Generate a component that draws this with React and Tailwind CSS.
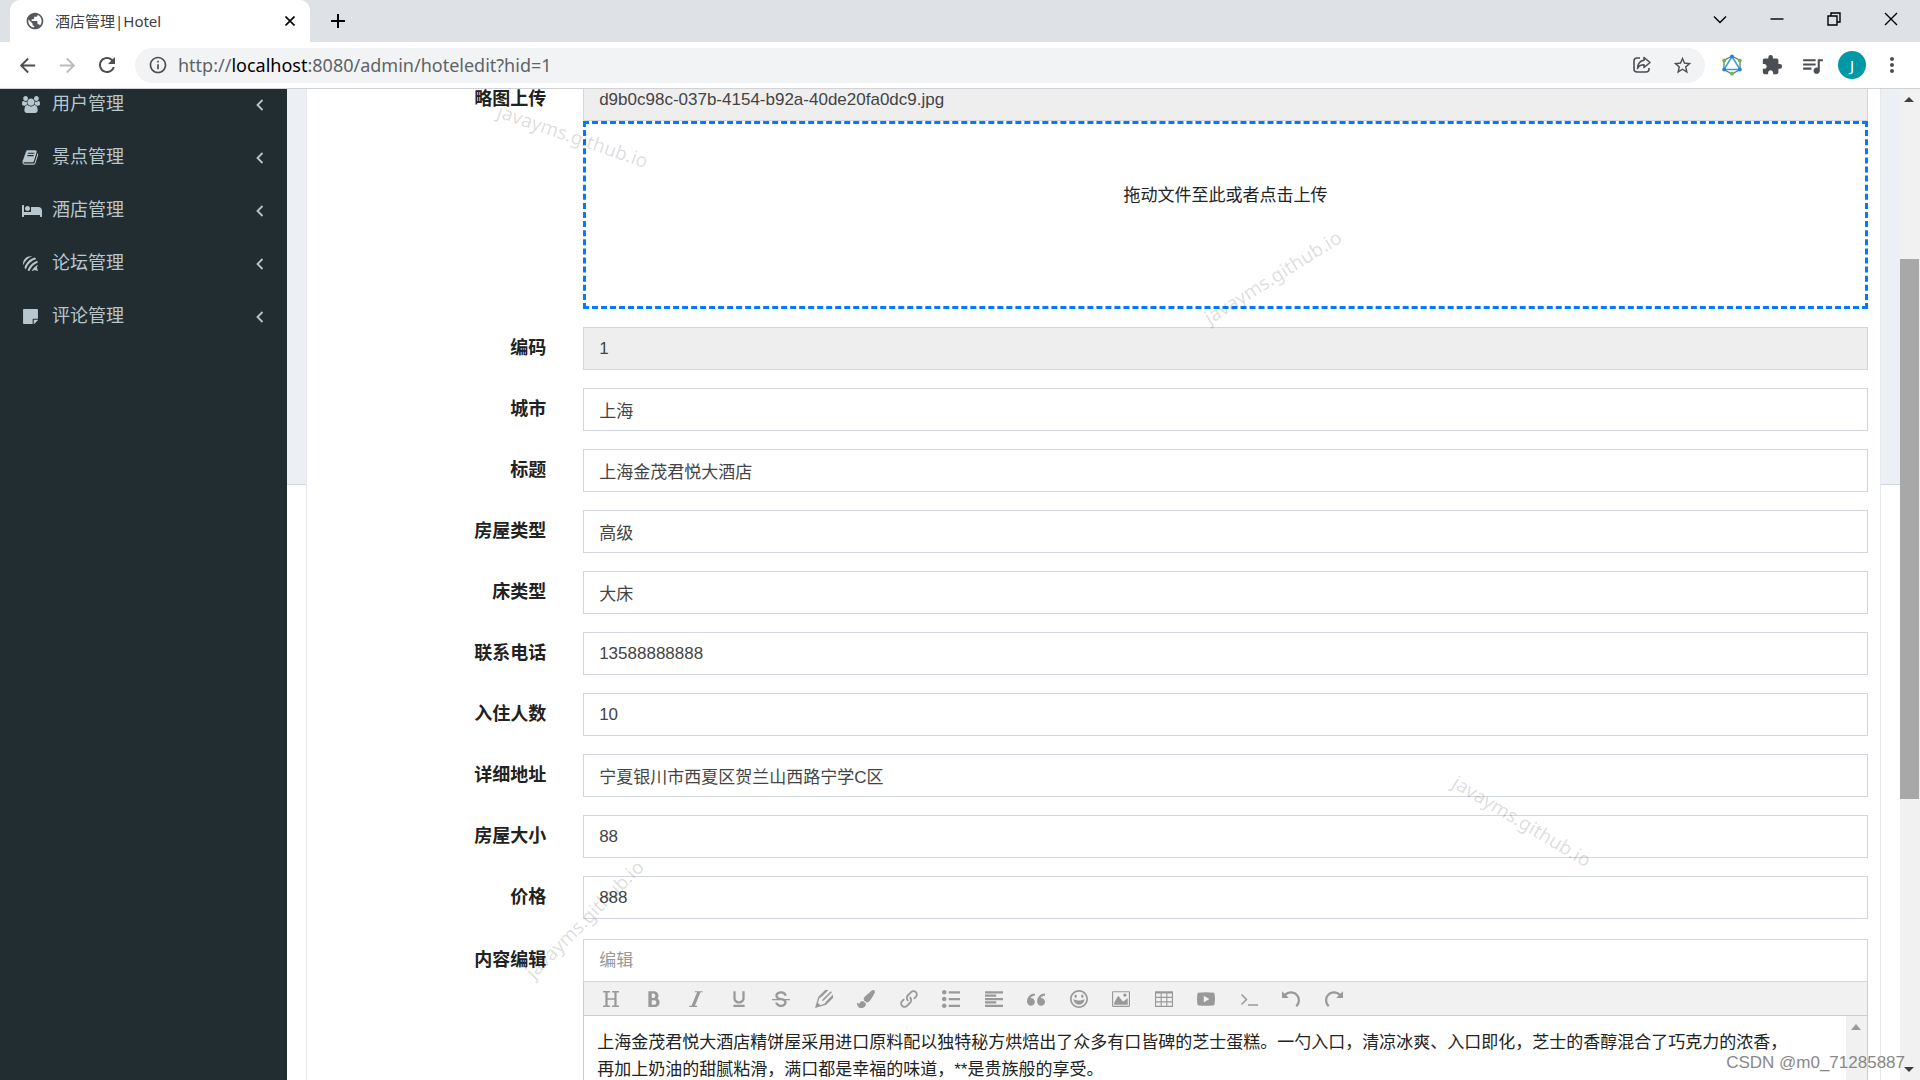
import { FaBed, FaForumbee, FaPaintBrush, FaStickyNote } from "react-icons/fa";
import {
  ImBold,
  ImHappy,
  ImImage,
  ImItalic,
  ImLink,
  ImList2,
  ImParagraphLeft,
  ImPencil2,
  ImPlay,
  ImQuotesLeft,
  ImRedo,
  ImStrikethrough,
  ImTable2,
  ImUnderline,
  ImUndo,
} from "react-icons/im";
import {
  MdArrowBack,
  MdArrowForward,
  MdExtension,
  MdInfoOutline,
  MdMoreVert,
  MdPublic,
  MdQueueMusic,
  MdRefresh,
  MdStarBorder,
} from "react-icons/md";

function UsersIcon({ size }) {
  return (
    <svg width={size + 1} height={size} viewBox="0 0 1920 1792" fill="currentColor">
      <path d="M593 896q-162 5-265 128h-134q-82 0-138-40.5t-56-118.5q0-353 124-353 6 0 43.5 21t97.5 42.5 119 21.5q67 0 133-23-5 37-5 66 0 139 81 256zm1071 637q0 120-73 189.5t-194 69.5h-874q-121 0-194-69.5t-73-189.5q0-53 3.5-103.5t14-109 26.5-108.5 43-97.5 62-81 85.5-53.5 111.5-20q10 0 43 21.5t73 48 107 48 135 21.5 135-21.5 107-48 73-48 43-21.5q61 0 111.5 20t85.5 53.5 62 81 43 97.5 26.5 108.5 14 109 3.5 103.5zm-1024-1277q0 106-75 181t-181 75-181-75-75-181 75-181 181-75 181 75 75 181zm704 384q0 159-112.5 271.5t-271.5 112.5-271.5-112.5-112.5-271.5 112.5-271.5 271.5-112.5 271.5 112.5 112.5 271.5zm576 225q0 78-56 118.5t-138 40.5h-134q-103-123-265-128 81-117 81-256 0-29-5-66 66 23 133 23 59 0 119-21.5t97.5-42.5 43.5-21q124 0 124 353zm-128-609q0 106-75 181t-181 75-181-75-75-181 75-181 181-75 181 75 75 181z" />
    </svg>
  );
}

function BookIcon({ size }) {
  return (
    <svg width={size} height={size} viewBox="64 0 1700 1792" fill="currentColor">
      <path d="M1703 478q40 57 18 129l-275 906q-19 64-76.5 107.5t-122.5 43.5h-923q-77 0-148.5-53.5t-99.5-131.5q-24-67-2-127 0-4 3-27t4-37q1-8-3-21.5t-3-19.5q2-11 8-21t16.5-23.5 16.5-23.5q23-38 45-91.5t30-91.5q3-10 .5-30t-.5-28q3-11 17-28t17-23q21-36 42-92t25-90q1-9-2.5-32t.5-28q4-13 22-30.5t22-22.5q19-26 42.5-84.5t27.5-96.5q1-8-3-25.5t-2-26.5q2-8 9-18t18-23 17-21q8-12 16.5-30.5t15-35 16-36 19.5-32 26.5-23.5 36-11.5 47.5 5.5l-1 3q38-9 51-9h761q74 0 114 56t18 130l-274 906q-36 119-71.5 153.5t-128.5 34.5h-869q-27 0-38 15-11 16-1 43 24 70 144 70h923q29 0 56-15.5t35-41.5l300-987q7-22 5-57 38 15 59 43zm-1064 2q-4 13 2 22.5t20 9.5h608q13 0 25.5-9.5t16.5-22.5l21-64q4-13-2-22.5t-20-9.5h-608q-13 0-25.5 9.5t-16.5 22.5zm-83 256q-4 13 2 22.5t20 9.5h608q13 0 25.5-9.5t16.5-22.5l21-64q4-13-2-22.5t-20-9.5h-608q-13 0-25.5 9.5t-16.5 22.5z" />
    </svg>
  );
}

function BedIcon({ size }) {
  return <FaBed size={size + 3} />;
}

function HeaderIcon({ size }) {
  return (
    <svg width={size} height={size} viewBox="0 0 18 18" fill="none" stroke="currentColor">
      <path d="M4.5 2v14M13.5 2v14" strokeWidth="2.2" />
      <path d="M1 1.7h7M10 1.7h7M1 16.3h7M10 16.3h7M4.5 9h9" strokeWidth="1.4" />
    </svg>
  );
}

function TerminalIcon({ size }) {
  return (
    <svg width={size} height={size} viewBox="0 0 18 18" fill="none" stroke="currentColor" strokeWidth="1.5">
      <path d="M1.5 4.5l5 5-5 5M8 15h10" />
    </svg>
  );
}

function ShareIcon() {
  return (
    <svg width="20" height="20" viewBox="0 0 20 20" fill="none" stroke="currentColor" strokeWidth="1.6">
      <path d="M8 3H5a3 3 0 0 0-3 3v8a3 3 0 0 0 3 3h9a3 3 0 0 0 3-3v-1" />
      <path d="M12 2.5l6 5-6 5V9.8C8.5 9.8 6.8 11 5.5 13.5 5.8 8.5 8.500 5.600 12 5.200z" strokeLinejoin="round" />
    </svg>
  );
}

function HexIcon() {
  return (
    <svg width="20" height="22" viewBox="0 0 20 22" fill="none">
      <path d="M10 2l8 4.500v9L10 20l-8-4.500v-9z" stroke="#5f7f7a" strokeWidth="1.300" />
      <path d="M10 2.500L18 15.500H2z" stroke="#3f9be6" strokeWidth="1.500" />
      <g fill="#1d86dc">
        <circle cx="10" cy="2.500" r="1.900" />
        <circle cx="2.200" cy="15.500" r="1.900" />
        <circle cx="17.800" cy="15.500" r="1.900" />
      </g>
      <g fill="#62c334">
        <circle cx="2.200" cy="6.500" r="1.900" />
        <circle cx="17.800" cy="6.500" r="1.900" />
        <circle cx="10" cy="19.700" r="1.900" />
      </g>
    </svg>
  );
}

function WindowIcon({ d }) {
  return (
    <svg width="14" height="14" viewBox="0 0 14 14" fill="none" stroke="currentColor" strokeWidth="1.4">
      <path d={d} />
    </svg>
  );
}

const windowButtons = [
  { title: "Search tabs", d: "M1 4.500l6 6 6-6" },
  { title: "Minimize", d: "M0.500 7h13" },
  { title: "Restore", d: "M1 4h9v9h-9zM4 4V1h9v9h-3" },
  { title: "Close", d: "M1 1l12 12M13 1L1 13" },
];

function TabStrip() {
  return (
    <div className="flex h-[42px] bg-[#dee1e6] pl-[10px]">
      <div className="flex w-[300px] items-center gap-[10px] rounded-t-[10px] bg-white px-[15px] text-[#3c4043]">
        <MdPublic size={20} className="text-[#55585c]" />
        <span className="flex-1 text-[15px]">酒店管理|Hotel</span>
        <button title="Close tab" className="text-black">
          <svg width="10" height="10" viewBox="0 0 10 10" stroke="currentColor" strokeWidth="1.600">
            <path d="M0.500 0.500l9 9M9.500 0.500l-9 9" />
          </svg>
        </button>
      </div>
      <button title="New tab" className="ml-5 self-center text-black">
        <svg width="16" height="16" viewBox="0 0 16 16" stroke="currentColor" strokeWidth="2">
          <path d="M8 1v14M1 8h14" />
        </svg>
      </button>
      <div className="ml-auto flex h-[37px] pr-px">
        {windowButtons.map((b) => (
          <button key={b.title} title={b.title} className="flex w-[57px] items-center justify-center text-black">
            <WindowIcon d={b.d} />
          </button>
        ))}
      </div>
    </div>
  );
}

function BarButton({ title, children }) {
  return (
    <button title={title} className="flex w-10 items-center justify-center">
      {children}
    </button>
  );
}

function AddressBar() {
  return (
    <div className="flex h-[47px] items-center border-b border-[#d0d2d5] bg-white text-[#4b4e52]">
      <div className="flex w-[135px] items-center pl-[7px]">
        <BarButton title="Back"><MdArrowBack size={23} /></BarButton>
        <BarButton title="Forward"><MdArrowForward size={23} className="text-[#babcbe]" /></BarButton>
        <BarButton title="Reload"><MdRefresh size={24} /></BarButton>
      </div>
      <div className="flex h-[35px] flex-1 items-center gap-[10px] rounded-full bg-[#f1f3f4] pr-[3px] pl-[13px]">
        <MdInfoOutline size={20} />
        <div className="flex-1 text-[18px] text-[#5f6368]">
          http://<span className="text-black">localhost</span>:8080/admin/hoteledit?hid=1
        </div>
        <div className="flex items-center">
          <BarButton title="Share"><ShareIcon /></BarButton>
          <BarButton title="Bookmark"><MdStarBorder size={21} /></BarButton>
        </div>
      </div>
      <div className="flex items-center pr-2 pl-[7px]">
        <BarButton title="Extension"><HexIcon /></BarButton>
        <BarButton title="Extensions"><MdExtension size={22} /></BarButton>
        <BarButton title="Media"><MdQueueMusic size={25} /></BarButton>
        <BarButton title="Profile">
          <span className="flex size-7 items-center justify-center rounded-full bg-[#0097a7] text-[15px] text-white">J</span>
        </BarButton>
        <BarButton title="Menu"><MdMoreVert size={24} /></BarButton>
      </div>
    </div>
  );
}

const menu = [
  { label: "用户管理", Icon: UsersIcon },
  { label: "景点管理", Icon: BookIcon },
  { label: "酒店管理", Icon: BedIcon },
  { label: "论坛管理", Icon: FaForumbee },
  { label: "评论管理", Icon: FaStickyNote },
];

function Sidebar() {
  return (
    <nav className="w-[287px] shrink-0 bg-[#222d32] text-[#b8c7ce]">
      <ul className="-mt-[11px]">
        {menu.map(({ label, Icon }) => (
          <li key={label}>
            <a href="#" className="flex h-[53px] items-center pr-[23px] pl-[22px] text-[18px]">
              <span className="w-[30px]"><Icon size={17} /></span>
              <span className="flex-1">{label}</span>
              <svg width="8" height="12" viewBox="0 0 8 12" fill="none" stroke="currentColor" strokeWidth="1.800">
                <path d="M6.500 1L1.500 6l5 5" />
              </svg>
            </a>
          </li>
        ))}
      </ul>
    </nav>
  );
}

const fields = [
  { id: "hid", label: "编码", value: "1", readOnly: true },
  { id: "city", label: "城市", value: "上海" },
  { id: "title", label: "标题", value: "上海金茂君悦大酒店" },
  { id: "roomType", label: "房屋类型", value: "高级" },
  { id: "bedType", label: "床类型", value: "大床" },
  { id: "phone", label: "联系电话", value: "13588888888" },
  { id: "people", label: "入住人数", value: "10" },
  { id: "address", label: "详细地址", value: "宁夏银川市西夏区贺兰山西路宁学C区" },
  { id: "area", label: "房屋大小", value: "88" },
  { id: "price", label: "价格", value: "888" },
];

const inputClass =
  "block h-[43px] w-full border border-[#d2d6de] bg-white px-[15px] text-[17px] text-[#444] outline-none placeholder:text-[#999] read-only:bg-[#eee]";

function FormRow({ id, label, children }) {
  return (
    <div className="flex">
      <label htmlFor={id} className="w-1/6 pr-[19px] text-right text-[18px] leading-[43px] font-bold text-[#222]">
        {label}
      </label>
      <div className="w-5/6 px-[18px]">{children}</div>
    </div>
  );
}

const tools = [
  ["标题", HeaderIcon],
  ["粗体", ImBold],
  ["斜体", ImItalic],
  ["下划线", ImUnderline],
  ["删除线", ImStrikethrough],
  ["文字颜色", ImPencil2],
  ["背景色", FaPaintBrush],
  ["链接", ImLink],
  ["列表", ImList2],
  ["对齐", ImParagraphLeft],
  ["引用", ImQuotesLeft],
  ["表情", ImHappy],
  ["图片", ImImage],
  ["表格", ImTable2],
  ["视频", ImPlay],
  ["代码", TerminalIcon],
  ["撤销", ImUndo],
  ["重做", ImRedo],
];

const content =
  "上海金茂君悦大酒店精饼屋采用进口原料配以独特秘方烘焙出了众多有口皆碑的芝士蛋糕。一勺入口，清凉冰爽、入口即化，芝士的香醇混合了巧克力的浓香，\n再加上奶油的甜腻粘滑，满口都是幸福的味道，**是贵族般的享受。";

function Editor() {
  return (
    <div className="border border-t-0 border-[#ccc]">
      <div className="border-b border-[#ccc] bg-[#f1f1f1] px-[6px]">
        <div className="grid h-[33px] w-[765px] grid-cols-18 text-[#999]">
          {tools.map(([title, Icon]) => (
            <button key={title} type="button" title={title} className="flex items-center justify-center">
              <Icon size={18} />
            </button>
          ))}
        </div>
      </div>
      <div className="flex h-[375px]">
        <textarea
          aria-label="内容"
          defaultValue={content}
          className="flex-1 resize-none overflow-hidden py-[13px] pl-[13px] text-[17px] leading-[27px] text-[#222] outline-none"
        />
        <div className="flex w-[21px] justify-center bg-[#f1f1f1] pt-2">
          <svg width="10" height="6" viewBox="0 0 10 6" fill="#999">
            <path d="M5 0l5 6H0z" />
          </svg>
        </div>
      </div>
    </div>
  );
}

function HotelForm() {
  return (
    <form className="-mx-[6px]">
      <div className="mb-[18px]">
        <FormRow id="thumb" label="略图上传">
          <input id="thumb" readOnly className={inputClass} defaultValue="d9b0c98c-037b-4154-b92a-40de20fa0dc9.jpg" />
          <button
            type="button"
            className="block h-[188px] w-full border-3 border-dashed border-[#007bff] pb-[38px] text-[17px] text-[#222]"
          >
            拖动文件至此或者点击上传
          </button>
        </FormRow>
      </div>
      <div className="mb-[20px] flex flex-col gap-[18px]">
        {fields.map((f) => (
          <FormRow key={f.id} id={f.id} label={f.label}>
            <input id={f.id} readOnly={f.readOnly} defaultValue={f.value} className={inputClass} />
          </FormRow>
        ))}
      </div>
      <FormRow id="content" label="内容编辑">
        <input id="content" placeholder="编辑" className={inputClass} />
        <Editor />
      </FormRow>
    </form>
  );
}

function Scrollbar() {
  return (
    <div className="flex w-[20px] shrink-0 flex-col items-center bg-[#f1f1f1]">
      <svg width="20" height="20" viewBox="0 0 20 20" fill="#404040">
        <path d="M9 8l5 5H4z" />
      </svg>
      <div className="flex-[150]" />
      <div className="w-[19px] flex-[541] self-start bg-[#a8a8a8]" />
      <div className="flex-[261]" />
      <svg width="20" height="20" viewBox="0 0 20 20" fill="#404040">
        <path d="M9 12l5-5H4z" />
      </svg>
    </div>
  );
}

const marks = [
  "top-[33px] left-[494px] rotate-[19deg]",
  "top-[174px] left-[1194px] -rotate-[32deg]",
  "top-[718px] left-[1443px] rotate-[31deg]",
  "top-[816px] left-[506px] -rotate-[45deg]",
];

export default function App() {
  return (
    <div className="flex h-screen flex-col overflow-hidden bg-white font-['Noto_Sans','Noto_Sans_CJK_SC',sans-serif]">
      <TabStrip />
      <AddressBar />
      <div className="relative flex min-h-0 flex-1 overflow-hidden font-['Liberation_Sans','Noto_Sans_CJK_SC',sans-serif]">
        <Sidebar />
        <main className="min-w-0 flex-1">
          <div className="-mt-[11px] h-[407px] border-b border-[#d2d6de] bg-[#ecf0f5] px-[19px]">
            <div className="border-x border-[#e6e8ec] bg-white">
              <HotelForm />
            </div>
          </div>
        </main>
        <Scrollbar />
        {marks.map((pos) => (
          <span
            key={pos}
            className={`pointer-events-none absolute font-['Noto_Sans',sans-serif] text-[19px] text-black/15 ${pos}`}
          >
            javayms.github.io
          </span>
        ))}
        <span className="pointer-events-none absolute right-[15px] bottom-[5px] text-[17px] text-[#888]">
          CSDN @m0_71285887
        </span>
      </div>
    </div>
  );
}
